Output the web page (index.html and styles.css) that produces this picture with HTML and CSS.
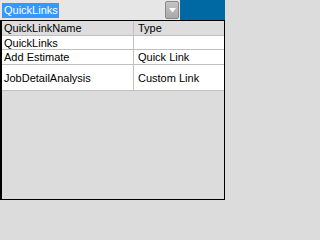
FILE: index.html
```html
<!DOCTYPE html>
<html>
<head>
<meta charset="utf-8">
<link rel="stylesheet" href="styles.css">
</head>
<body>
<div class="app">
  <div class="topbar">
    <div class="combo">
      <span class="combo-text"><span class="sel">QuickLinks</span></span>
      <span class="combo-btn">
        <svg width="7" height="5" viewBox="0 0 7 5"><path d="M0 0 L7 0 L3.5 4.5 Z" fill="#ffffff"/></svg>
      </span>
    </div>
  </div>
  <div class="grid">
    <div class="row head">
      <div class="cell c1">QuickLinkName</div>
      <div class="cell c2">Type</div>
    </div>
    <div class="row short">
      <div class="cell c1">QuickLinks</div>
      <div class="cell c2"></div>
    </div>
    <div class="row">
      <div class="cell c1">Add Estimate</div>
      <div class="cell c2">Quick Link</div>
    </div>
    <div class="row tall">
      <div class="cell c1">JobDetailAnalysis</div>
      <div class="cell c2">Custom Link</div>
    </div>
    <div class="empty"></div>
  </div>
</div>
</body>
</html>
```

FILE: styles.css
```css
* { box-sizing: border-box; }
html, body { margin: 0; padding: 0; }
body {
  width: 225px;
  height: 200px;
  overflow: hidden;
  font-family: "Liberation Sans", Arial, sans-serif;
  font-size: 11px;
  color: #000;
  background: #dcdcdc;
}
.app {
  display: flex;
  flex-direction: column;
  width: 225px;
  height: 200px;
}
.topbar {
  height: 20px;
  flex: none;
  background: #0068a3;
  display: flex;
}
.combo {
  width: 180px;
  height: 20px;
  background: #e6e6e6;
  display: flex;
  align-items: center;
  padding: 1px 1px 1px 2px;
}
.combo-text {
  flex: 1;
  display: flex;
  align-items: center;
  height: 16px;
}
.sel {
  background: #3399ff;
  color: #fff;
  line-height: 15px;
  padding: 0 1px 0 2px;
}
.combo-btn {
  width: 14px;
  height: 18px;
  border: 1px solid #8a8a8a;
  border-radius: 2px;
  background: linear-gradient(#c4c4c4, #a8a8a8);
  display: flex;
  align-items: center;
  justify-content: center;
}
.grid {
  flex: 1;
  display: flex;
  flex-direction: column;
  border: 1px solid #000;
  border-left-width: 2px;
  background: #dcdcdc;
}
.row {
  display: flex;
  height: 15px;
  flex: none;
  background: #fff;
  border-bottom: 1px solid #c0c0c0;
}
.row.head {
  background: #dddddd;
}
.row.short {
  height: 14px;
}
.row.tall {
  height: 26px;
}
.cell {
  display: flex;
  align-items: center;
  padding-left: 2px;
  white-space: nowrap;
}
.c1 {
  width: 132px;
  border-right: 1px solid #c0c0c0;
}
.c2 {
  flex: 1;
  padding-left: 4px;
}
.empty {
  flex: 1;
}
```
